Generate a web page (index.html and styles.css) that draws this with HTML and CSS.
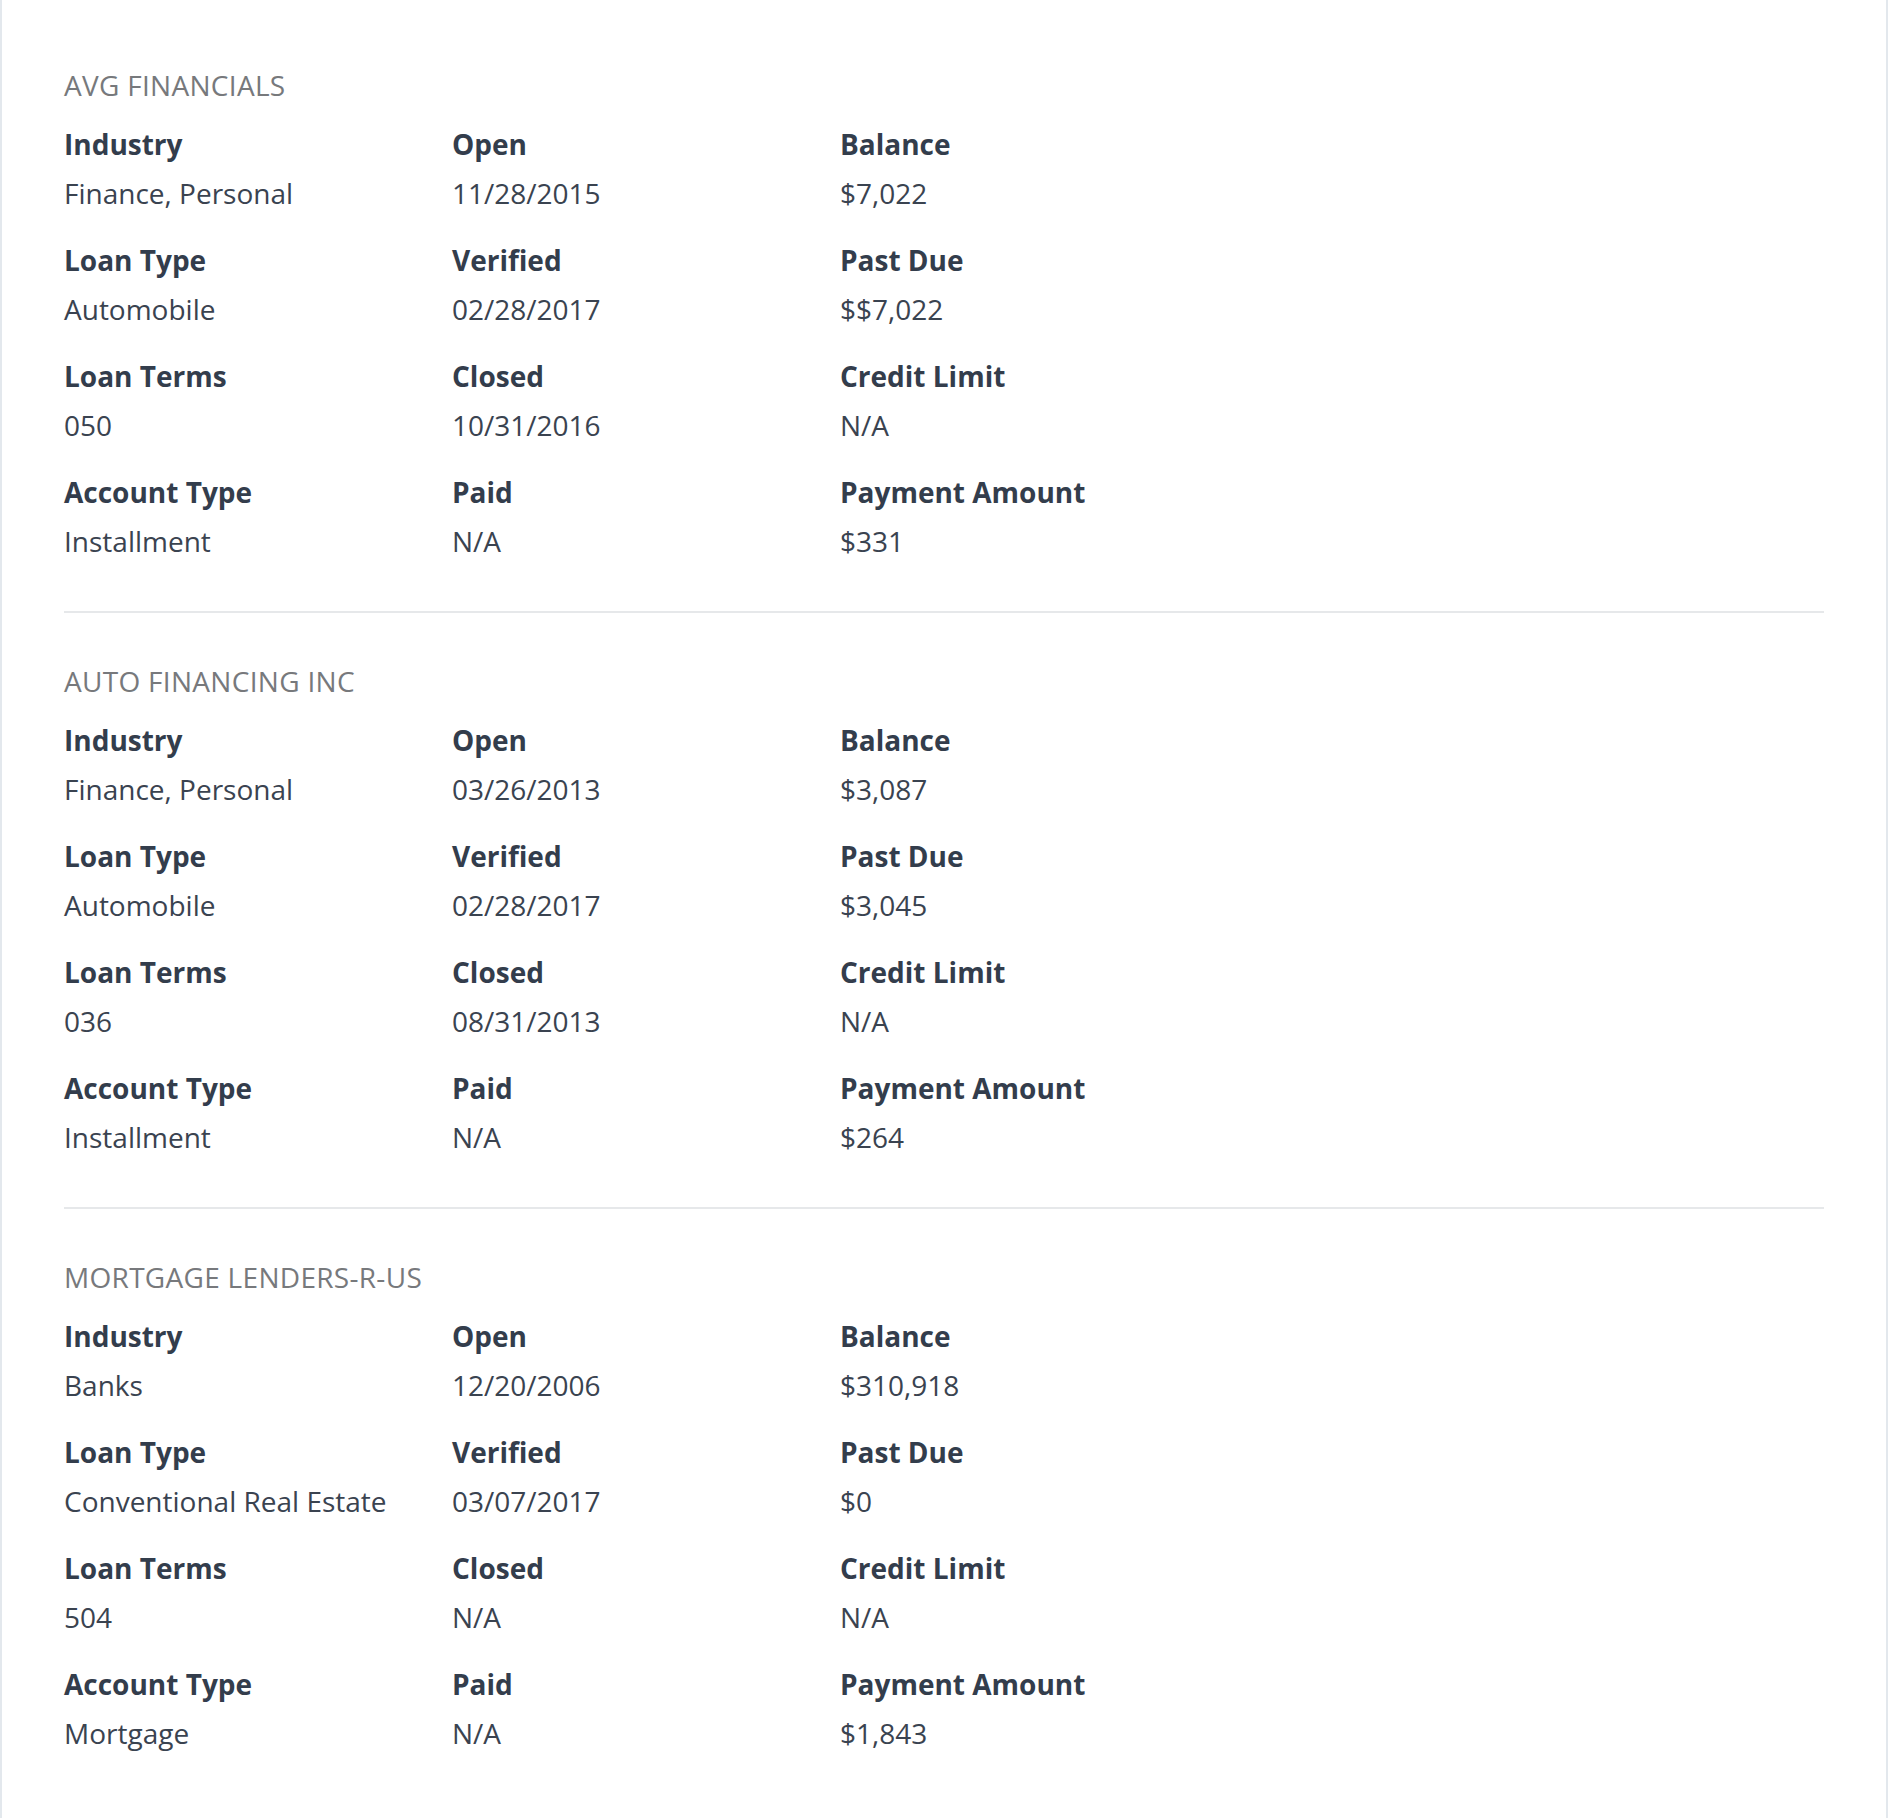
FILE: index.html
```html
<!DOCTYPE html>
<html lang="en">
<head>
<meta charset="utf-8">
<title>Accounts</title>
<link rel="stylesheet" href="styles.css">
</head>
<body>
<div class="card">
  <section class="account">
    <h2 class="lender">AVG FINANCIALS</h2>
    <div class="grid">
      <div class="field"><div class="label">Industry</div><div class="value">Finance, Personal</div></div>
      <div class="field"><div class="label">Open</div><div class="value">11/28/2015</div></div>
      <div class="field"><div class="label">Balance</div><div class="value">$7,022</div></div>
      <div class="field"><div class="label">Loan Type</div><div class="value">Automobile</div></div>
      <div class="field"><div class="label">Verified</div><div class="value">02/28/2017</div></div>
      <div class="field"><div class="label">Past Due</div><div class="value">$$7,022</div></div>
      <div class="field"><div class="label">Loan Terms</div><div class="value">050</div></div>
      <div class="field"><div class="label">Closed</div><div class="value">10/31/2016</div></div>
      <div class="field"><div class="label">Credit Limit</div><div class="value">N/A</div></div>
      <div class="field"><div class="label">Account Type</div><div class="value">Installment</div></div>
      <div class="field"><div class="label">Paid</div><div class="value">N/A</div></div>
      <div class="field"><div class="label">Payment Amount</div><div class="value">$331</div></div>
    </div>
  </section>
  <section class="account">
    <h2 class="lender">AUTO FINANCING INC</h2>
    <div class="grid">
      <div class="field"><div class="label">Industry</div><div class="value">Finance, Personal</div></div>
      <div class="field"><div class="label">Open</div><div class="value">03/26/2013</div></div>
      <div class="field"><div class="label">Balance</div><div class="value">$3,087</div></div>
      <div class="field"><div class="label">Loan Type</div><div class="value">Automobile</div></div>
      <div class="field"><div class="label">Verified</div><div class="value">02/28/2017</div></div>
      <div class="field"><div class="label">Past Due</div><div class="value">$3,045</div></div>
      <div class="field"><div class="label">Loan Terms</div><div class="value">036</div></div>
      <div class="field"><div class="label">Closed</div><div class="value">08/31/2013</div></div>
      <div class="field"><div class="label">Credit Limit</div><div class="value">N/A</div></div>
      <div class="field"><div class="label">Account Type</div><div class="value">Installment</div></div>
      <div class="field"><div class="label">Paid</div><div class="value">N/A</div></div>
      <div class="field"><div class="label">Payment Amount</div><div class="value">$264</div></div>
    </div>
  </section>
  <section class="account last">
    <h2 class="lender">MORTGAGE LENDERS-R-US</h2>
    <div class="grid">
      <div class="field"><div class="label">Industry</div><div class="value">Banks</div></div>
      <div class="field"><div class="label">Open</div><div class="value">12/20/2006</div></div>
      <div class="field"><div class="label">Balance</div><div class="value">$310,918</div></div>
      <div class="field"><div class="label">Loan Type</div><div class="value">Conventional Real Estate</div></div>
      <div class="field"><div class="label">Verified</div><div class="value">03/07/2017</div></div>
      <div class="field"><div class="label">Past Due</div><div class="value">$0</div></div>
      <div class="field"><div class="label">Loan Terms</div><div class="value">504</div></div>
      <div class="field"><div class="label">Closed</div><div class="value">N/A</div></div>
      <div class="field"><div class="label">Credit Limit</div><div class="value">N/A</div></div>
      <div class="field"><div class="label">Account Type</div><div class="value">Mortgage</div></div>
      <div class="field"><div class="label">Paid</div><div class="value">N/A</div></div>
      <div class="field"><div class="label">Payment Amount</div><div class="value">$1,843</div></div>
    </div>
  </section>
</div>
</body>
</html>
```
FILE: styles.css
```css
html, body {
  margin: 0;
  padding: 0;
  background: #ffffff;
}
body {
  font-family: "Open Sans", "Noto Sans", sans-serif;
}
.card {
  box-sizing: border-box;
  min-height: 1818px;
  border-left: 2px solid #e3e8ed;
  border-right: 2px solid #e3e8ed;
  padding: 67px 62px 0 62px;
  background: #ffffff;
}
.account {
  border-bottom: 2px solid #e6e8ea;
  padding-bottom: 50px;
  margin-bottom: 50px;
}
.account.last {
  border-bottom: none;
  margin-bottom: 0;
}
.lender {
  margin: 0 0 21px 0;
  font-size: 28px;
  line-height: 36px;
  font-weight: 400;
  color: #77797c;
  letter-spacing: 0.3px;
}
.grid {
  display: grid;
  grid-template-columns: 388px 388px 1fr;
  row-gap: 27px;
}
.label {
  font-size: 28px;
  line-height: 40px;
  font-weight: 700;
  color: #333d4c;
}
.value {
  margin-top: 9px;
  font-size: 28px;
  line-height: 40px;
  font-weight: 400;
  color: #3a4350;
}
```
